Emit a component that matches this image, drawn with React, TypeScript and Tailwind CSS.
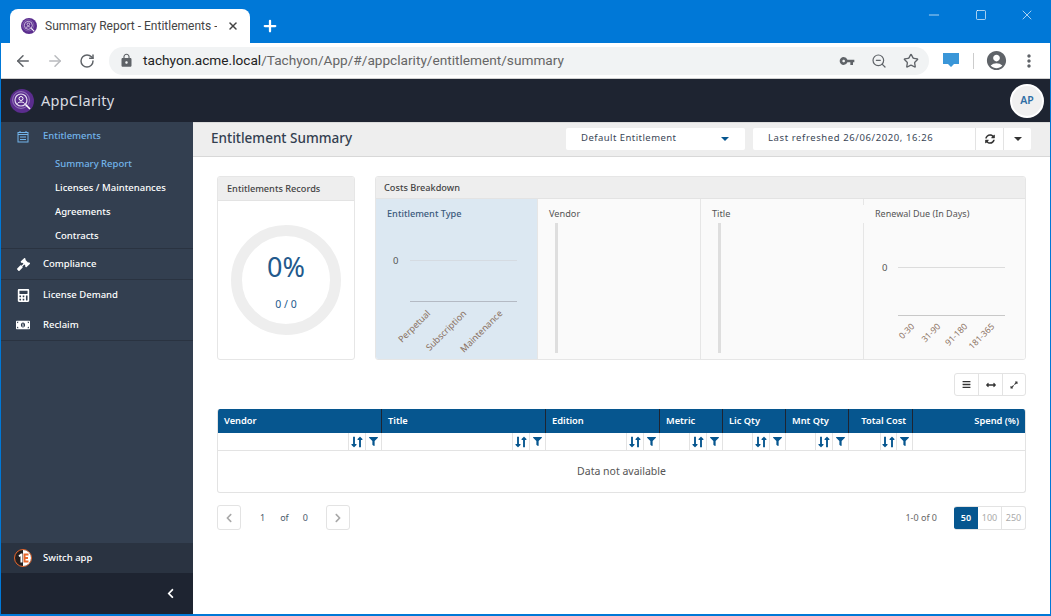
import { ArrowLeft, ArrowRight, RotateCw, ZoomOut, Star, Plus, X, Minus, Square } from 'lucide-react';
import { FaGavel, FaCalculator, FaMoneyBillAlt, FaChevronLeft, FaChevronRight, FaSyncAlt, FaFilter, FaBars, FaArrowsAltH, FaExpandAlt, FaLongArrowAltDown, FaLongArrowAltUp } from 'react-icons/fa';
import { MdLock, MdVpnKey, MdAccountCircle, MdMoreVert } from 'react-icons/md';

function Logo({ size }: { size: number }) {
  return (
    <svg width={size} height={size} viewBox="0 0 24 24" className="shrink-0">
      <circle cx="12" cy="12" r="12" fill="#5b2d8e" />
      <circle cx="11" cy="11" r="6" fill="none" stroke="#e4dcef" strokeWidth="1.2" />
      <circle cx="11" cy="11" r="8.4" fill="none" stroke="#a78fc8" strokeWidth="0.8" />
      <circle cx="11" cy="9.5" r="2" fill="none" stroke="#fff" strokeWidth="1" />
      <path d="M7.5 14.5c1-2 6-2 7 0" fill="none" stroke="#fff" strokeWidth="1" />
      <path d="M15.5 15.5l4.5 4.5" stroke="#fff" strokeWidth="1.6" />
    </svg>
  );
}

function SortIcon() {
  return (
    <span className="flex items-center -space-x-[5.5px] text-[#06568f]">
      <FaLongArrowAltDown size={12} />
      <FaLongArrowAltUp size={12} />
    </span>
  );
}

function FilterCell({ width }: { width: string }) {
  return (
    <div className="flex justify-end border-r border-[#e3e3e3] h-full">
      <div className={`flex items-center justify-center h-full border-l border-[#e3e3e3] ${width}`}>
        <SortIcon />
      </div>
      <div className="flex items-center justify-center h-full w-4 border-l border-[#e3e3e3] text-[#06568f]">
        <FaFilter size={9} />
      </div>
    </div>
  );
}

function NavItem({ icon, label, active, first }: { icon: React.ReactNode; label: string; active?: boolean; first?: boolean }) {
  return (
    <div className={`flex items-center text-[9.5px] font-medium ${first ? 'h-[28px] pt-[1px]' : 'h-[30px]'} ${active ? 'text-[#72b4ea]' : 'text-white'}`}>
      <span className="w-[42px] flex justify-center pl-[2px]">{icon}</span>
      <span>{label}</span>
    </div>
  );
}

function EmptyBarPanel({ title }: { title: string }) {
  return (
    <div className="flex-1 border-l border-[#e6e6e6] bg-[#fafafa] pt-[6px]">
      <div className="h-[18px] flex items-center pl-[11px] text-[9.2px] text-[#555]">{title}</div>
      <div className="ml-[17px] w-[3px] h-[130px] bg-[#dedede]" />
    </div>
  );
}

const columns = [
  { name: 'Vendor', sort: 'w-[17px]' },
  { name: 'Title', sort: 'w-[17px]' },
  { name: 'Edition', sort: 'w-[17px]' },
  { name: 'Metric', sort: 'w-[17px]' },
  { name: 'Lic Qty', sort: 'w-[17px]' },
  { name: 'Mnt Qty', sort: 'w-[17px]' },
  { name: 'Total Cost', sort: 'w-[16px]', right: true },
];

const axisText = { fontSize: 9, fill: '#8a7060', fontFamily: 'Noto Sans', textAnchor: 'end' as const };

export default function App() {
  return (
    <div className="w-[1051px] h-[616px] overflow-hidden flex flex-col bg-white border border-t-0 border-[#0078d7] border-b-2 font-['Noto_Sans',sans-serif]">
      {/* browser title bar */}
      <div className="h-[43px] shrink-0 bg-[#0078d7] flex items-end pl-[9px] relative">
        <div className="w-[240px] h-[34px] bg-white rounded-t-[8px] flex items-center pl-[11px] pr-[11px]">
          <Logo size={16} />
          <span className="ml-[8px] flex-1 whitespace-nowrap overflow-hidden text-[12px] text-[#444] font-['Roboto',sans-serif]">Summary Report - Entitlements -</span>
          <X size={12} strokeWidth={3} className="ml-[10px] text-[#444]" />
        </div>
        <Plus size={18} strokeWidth={3} className="text-white ml-[11px] mb-[8px]" />
        <div className="absolute right-0 top-[7px] flex text-white">
          <Minus size={16} strokeWidth={1} className="mr-[33px]" />
          <Square size={12} strokeWidth={1.3} className="mt-[2px] mr-[32px]" />
          <X size={16} strokeWidth={1} className="mr-[15px]" />
        </div>
      </div>
      {/* browser toolbar */}
      <div className="h-[36px] shrink-0 bg-white flex items-center border-b border-[#d0d0d0] pl-[13px]">
        <ArrowLeft size={18} strokeWidth={2} className="text-[#5f6368]" />
        <ArrowRight size={18} strokeWidth={2} className="text-[#b9bbbe] ml-[14px]" />
        <RotateCw size={16} strokeWidth={2.2} className="text-[#5f6368] ml-[15px]" />
        <div className="ml-[14px] w-[820px] h-[28px] rounded-full bg-[#f1f3f4] flex items-center pl-[10px] pr-[10px]">
          <MdLock size={15} className="text-[#5f6368]" />
          <span className="ml-[9px] text-[13.65px] font-['Roboto',sans-serif] text-[#222] whitespace-nowrap">
            tachyon.acme.local<span className="text-[#666]">/Tachyon/App/#/appclarity/entitlement/summary</span>
          </span>
          <MdVpnKey size={16} className="ml-auto text-[#5f6368]" />
          <ZoomOut size={16} strokeWidth={1.8} className="ml-[16px] text-[#5f6368]" />
          <Star size={16} strokeWidth={2} className="ml-[16px] text-[#5f6368]" />
        </div>
        <svg width="16" height="15" viewBox="0 0 16 15" className="ml-[14px]">
          <path d="M0 0h16v11h-5l-3 3-3-3H0z" fill="#3a96d8" />
        </svg>
        <div className="ml-[14px] w-px h-[16px] bg-[#ccc]" />
        <MdAccountCircle size={23} className="ml-[11px] text-[#5f6368]" />
        <MdMoreVert size={20} className="ml-[11px] text-[#5f6368]" />
      </div>
      {/* app header */}
      <div className="h-[43px] shrink-0 bg-[#1e2431] flex items-center pl-[9px] pr-[6px]">
        <Logo size={24} />
        <span className="ml-[7px] text-[14.5px] text-[#d9dce1] tracking-[0.3px]">AppClarity</span>
        <div className="ml-auto w-[34px] h-[34px] rounded-full bg-[#f0f0f0] border-2 border-white flex items-center justify-center text-[10.5px] font-semibold text-[#2f6ea5]">AP</div>
      </div>
      <div className="flex-1 flex min-h-0">
        {/* sidebar */}
        <aside className="w-[192px] shrink-0 bg-[#333f50] flex flex-col">
          <div className="border-b border-[#2a3341]">
            <NavItem
              active
              first
              label="Entitlements"
              icon={
                <svg width="12" height="12" viewBox="0 0 12 12" fill="none" stroke="#72b4ea" strokeWidth="1">
                  <rect x="1" y="1.5" width="10" height="9.5" />
                  <path d="M1 3.5h10M3 6h6M3 8.5h6M3 0v2M9 0v2" />
                </svg>
              }
            />
            <div className="pl-[54px] pt-[1px] pb-[1px] text-[9.5px] font-medium text-white flex flex-col">
              <span className="h-[24px] pt-[2px] flex items-center text-[#72b4ea]">Summary Report</span>
              <span className="h-[24px] pt-[2px] flex items-center">Licenses / Maintenances</span>
              <span className="h-[24px] pt-[2px] flex items-center">Agreements</span>
              <span className="h-[24px] pt-[2px] flex items-center">Contracts</span>
            </div>
          </div>
          <div className="border-b border-[#2a3341]">
            <NavItem label="Compliance" icon={<FaGavel size={13} />} />
          </div>
          <NavItem label="License Demand" icon={<FaCalculator size={13} />} />
          <div className="border-b border-[#2a3341]">
            <NavItem label="Reclaim" icon={<FaMoneyBillAlt size={14} />} />
          </div>
          <div className="mt-auto h-[30px] bg-[#2a3341] flex items-center text-[9.5px] font-medium text-white">
            <span className="w-[42px] flex justify-center pl-[2px]">
              <svg width="18" height="18" viewBox="0 0 18 18">
                <circle cx="9" cy="9" r="8.5" fill="#231f20" stroke="#e8672c" strokeWidth="1" />
                <path d="M9 1a8 8 0 0 1 0 16z" fill="#fff" />
                <path d="M9.5 4.5h5v2h-3v1.5h2.5v2h-2.5v1.5h3v2h-5z" fill="#e8672c" />
                <path d="M4.5 6.5l2.5-2h1.5v9h-2v-6.2l-1.2.8z" fill="#fff" />
              </svg>
            </span>
            <span>Switch app</span>
          </div>
          <div className="h-[41px] bg-[#1e2431] flex items-center justify-end pr-[17px] text-white">
            <FaChevronLeft size={11} />
          </div>
        </aside>
        {/* main */}
        <main className="flex-1 min-w-0 bg-white flex flex-col">
          <div className="h-[35px] shrink-0 bg-[#eeeeee] border-b border-[#d8d8d8] flex items-center pl-[18px] pr-[19px] pb-[2px] border-t border-t-[#dcdcdc]">
            <h1 className="text-[13.5px] font-medium text-[#333f50]">Entitlement Summary</h1>
            <div className="ml-auto w-[179px] h-[22px] bg-white rounded-[2px] flex items-center pl-[15px] pr-[16px] text-[9.5px] tracking-[0.45px] text-[#3a4656]">
              Default Entitlement
              <span className="ml-auto w-0 h-0 border-x-[4px] border-x-transparent border-t-[4px] border-t-[#06568f]" />
            </div>
            <div className="ml-[8px] w-[278px] h-[22px] bg-white rounded-[2px] flex items-center text-[9.5px] text-[#3a4656]">
              <span className="flex-1 pl-[15px] tracking-[0.6px] whitespace-nowrap">Last refreshed 26/06/2020, 16:26</span>
              <span className="w-[28px] h-full border-l border-[#e3e3e3] flex items-center justify-center text-[#333]"><FaSyncAlt size={10} /></span>
              <span className="w-[28px] h-full border-l border-[#e3e3e3] flex items-center justify-center">
                <span className="w-0 h-0 border-x-[4px] border-x-transparent border-t-[4px] border-t-[#333]" />
              </span>
            </div>
          </div>
          <div className="flex-1 pt-[19px] pl-[24px] pr-[24px]">
            {/* summary cards */}
            <div className="flex gap-[21px] h-[184px]">
              <section className="w-[138px] -mr-px shrink-0 rounded-[3px] border border-[#e6e6e6] flex flex-col overflow-hidden">
                <div className="h-[24px] shrink-0 bg-[#eeeeee] border-b border-[#e3e3e3] flex items-center pl-[9px] text-[9.2px] text-[#444] font-medium whitespace-nowrap">Entitlements Records</div>
                <div className="flex-1 flex items-center justify-center">
                  <div className="w-[110px] h-[110px] rounded-full border-[11px] border-[#eeeeee] flex flex-col items-center justify-center">
                    <span className="text-[27px] leading-[32px] text-[#23598c] -translate-y-[3px]">0%</span>
                    <span className="text-[10.5px] text-[#23598c] mt-[11px] mb-[-6px]">0 / 0</span>
                  </div>
                </div>
              </section>
              <section className="flex-1 rounded-[3px] border border-[#e6e6e6] flex flex-col overflow-hidden">
                <div className="h-[22px] shrink-0 bg-[#eeeeee] border-b border-[#e3e3e3] flex items-center pl-[8px] text-[9.2px] text-[#444] font-medium">Costs Breakdown</div>
                <div className="flex-1 min-h-0 flex">
                  <div className="w-[161px] shrink-0 bg-[#dce8f2] pt-[6px]">
                    <div className="h-[18px] flex items-center pl-[11px] text-[9.2px] font-medium text-[#3b5a7c]">Entitlement Type</div>
                    <svg width="161" height="137" className="block">
                      <text x="17" y="41" fontSize="9.5" fill="#555" fontFamily="Noto Sans">0</text>
                      <line x1="34" x2="141" y1="37.5" y2="37.5" stroke="#d5dbe2" strokeWidth="1" />
                      <line x1="34" x2="141" y1="78.5" y2="78.5" stroke="#b4bac4" strokeWidth="1" />
                      <text transform="translate(55 91) rotate(-45)" {...axisText}>Perpetual</text>
                      <text transform="translate(91 91) rotate(-45)" {...axisText}>Subscription</text>
                      <text transform="translate(127 91) rotate(-45)" {...axisText}>Maintenance</text>
                    </svg>
                  </div>
                  <div className="w-[163px] shrink-0 flex"><EmptyBarPanel title="Vendor" /></div>
                  <div className="w-[163px] shrink-0 flex"><EmptyBarPanel title="Title" /></div>
                  <div className="flex-1 border-l border-[#e6e6e6] bg-[#fafafa] pt-[6px]">
                    <div className="relative -ml-px h-[18px] flex items-center pl-[12px] bg-[#fafafa] text-[9px] text-[#555] whitespace-nowrap">Renewal Due (In Days)</div>
                    <svg width="161" height="137" className="block">
                      <text x="18" y="48" fontSize="9.5" fill="#555" fontFamily="Noto Sans">0</text>
                      <line x1="34" x2="141" y1="44.5" y2="44.5" stroke="#dcdcdc" strokeWidth="1" />
                      <line x1="34" x2="141" y1="92.5" y2="92.5" stroke="#c8c8c8" strokeWidth="1" />
                      <text transform="translate(51 104) rotate(-45)" {...axisText} fontSize={8.6}>0-30</text>
                      <text transform="translate(77 104) rotate(-45)" {...axisText} fontSize={8.6}>31-90</text>
                      <text transform="translate(104 104) rotate(-45)" {...axisText} fontSize={8.6}>91-180</text>
                      <text transform="translate(131 104) rotate(-45)" {...axisText} fontSize={8.6}>181-365</text>
                    </svg>
                  </div>
                </div>
              </section>
            </div>
            {/* table tools */}
            <div className="flex justify-end mt-[13px]">
              <div className="h-[23px] flex border border-[#e3e3e3] rounded-[3px] text-[#333]">
                <span className="w-[23px] flex items-center justify-center"><FaBars size={9} /></span>
                <span className="w-[24px] flex items-center justify-center border-l border-[#e3e3e3]"><FaArrowsAltH size={10} /></span>
                <span className="w-[23px] flex items-center justify-center border-l border-[#e3e3e3]"><FaExpandAlt size={8} /></span>
              </div>
            </div>
            {/* table */}
            <div className="mt-[13px] w-[809px] h-[84px] border border-[#e3e3e3] border-t-0 rounded-[3px] overflow-hidden">
              <div className="grid grid-cols-[164px_164px_114px_63px_63px_63px_64px_1fr] h-[24px] bg-[#06568f] text-white text-[9.3px] font-semibold">
                {columns.map(c => (
                  <div key={c.name} className={`flex items-center border-r border-[#1e2431] px-[6px] ${c.right ? 'justify-end' : ''}`}>{c.name}</div>
                ))}
                <div className="flex items-center justify-end px-[6px]">Spend (%)</div>
              </div>
              <div className="grid grid-cols-[164px_164px_114px_63px_63px_63px_64px_1fr] h-[18px] border-b border-[#e3e3e3]">
                {columns.map(c => (
                  <FilterCell key={c.name} width={c.sort} />
                ))}
                <div />
              </div>
              <div className="h-[41px] pt-[1px] flex items-center justify-center text-[10.5px] text-[#555]">Data not available</div>
            </div>
            {/* pager */}
            <div className="flex items-center mt-[12px] h-[25px] text-[9px] text-[#4a5a6c]">
              <span className="w-[24px] h-[25px] border border-[#e3e3e3] rounded-[3px] flex items-center justify-center text-[#a8a8a8]"><FaChevronLeft size={10} /></span>
              <span className="ml-[19px]">1</span>
              <span className="ml-[15px]">of</span>
              <span className="ml-[14px]">0</span>
              <span className="ml-[18px] w-[24px] h-[25px] border border-[#e3e3e3] rounded-[3px] flex items-center justify-center text-[#a8a8a8]"><FaChevronRight size={10} /></span>
              <span className="ml-auto mr-[17px] text-[#666]">1-0 of 0</span>
              <div className="flex h-[24px] rounded-[3px] overflow-hidden border border-[#e3e3e3] border-l-0 font-semibold">
                <span className="w-[24px] bg-[#06568f] text-white flex items-center justify-center">50</span>
                <span className="w-[24px] text-[#aaa] font-normal flex items-center justify-center border-r border-[#e3e3e3]">100</span>
                <span className="w-[23px] text-[#aaa] font-normal flex items-center justify-center">250</span>
              </div>
            </div>
          </div>
        </main>
      </div>
    </div>
  );
}
